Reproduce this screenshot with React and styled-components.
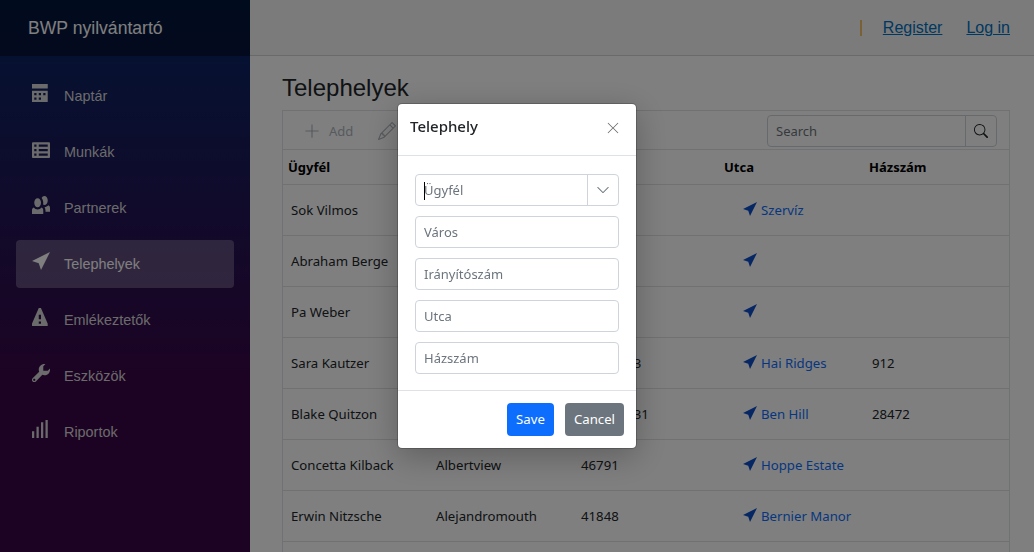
import React from 'react';
import styled, { createGlobalStyle } from 'styled-components';
import { BsPlusLg, BsPencil, BsSearch, BsChevronDown, BsXLg } from 'react-icons/bs';

const Global = createGlobalStyle`
  html, body { margin: 0; padding: 0; height: 100%; overflow: hidden; background: #fff; }
  * { box-sizing: border-box; }
  body { font-family: "Liberation Sans", Arial, sans-serif; }
`;

const Page = styled.div`display: flex; height: 552px; width: 1034px; overflow: hidden;`;
const Sidebar = styled.aside`width: 250px; flex: none; background: linear-gradient(180deg, #052767 0%, #3a0647 70%);`;
const Brand = styled.div`height: 56px; background: rgba(0,0,0,.4); display: flex; align-items: center; padding-left: 28px; color: #fff; font-size: 17.6px;`;
const Nav = styled.nav`display: flex; flex-direction: column; padding: 16px 16px 0;`;
const NavItem = styled.a`
  height: 48px; margin-bottom: 8px; display: flex; align-items: center; padding-left: 16px; border-radius: 4px;
  color: ${p => p.$active ? '#fff' : '#d7d7d7'}; font-size: 14.4px;
  background: ${p => p.$active ? 'rgba(255,255,255,.25)' : 'transparent'};
`;
const NavIcon = styled.svg`width: 18px; height: 18px; margin-right: 14px; fill: currentColor; flex: none; position: relative; top: -3px;`;

const Main = styled.main`flex: 1; min-width: 0; display: flex; flex-direction: column;`;
const TopRow = styled.header`
  height: 56px; flex: none; background: #f7f7f7; border-bottom: 1px solid #d6d5d5;
  display: flex; align-items: center; justify-content: flex-end; padding-right: 24px; font-size: 16px;
`;
const Divider = styled.span`width: 2px; height: 16px; background: #f5c36b; margin-right: 21px;`;
const TopLink = styled.a`color: #0071c1; text-decoration: underline; margin-left: ${p => p.$first ? 0 : '24px'};`;
const Content = styled.div`padding: 14px 24px 0 32px; font-family: "Noto Sans", sans-serif;`;
const Title = styled.h1`margin: 0 0 4px; font: 400 24px/36px "Liberation Sans", Arial, sans-serif; color: #212529;`;
const Grid = styled.div`border: 1px solid #dee2e6; border-bottom: 0; width: 728px;`;
const Toolbar = styled.div`height: 39px; display: flex; align-items: center; padding: 2px 12px 0 20px; border-bottom: 1px solid #dee2e6; color: #adb5bd; font-size: 13px;`;
const ToolBtn = styled.span`display: flex; align-items: center; gap: 8px; margin-right: 25px; svg { font-size: 18px; }`;
const SearchBox = styled.div`margin-left: auto; display: flex; width: 230px; height: 32px; border: 1px solid #ced4da; border-radius: 4px; align-items: center; color: #6c757d;`;
const SearchInput = styled.span`flex: 1; padding-left: 8px; font-size: 13px;`;
const SearchBtn = styled.span`width: 31px; height: 100%; border-left: 1px solid #ced4da; display: flex; align-items: center; justify-content: center; color: #212529; font-size: 14px;`;
const Row = styled.div`
  display: grid; grid-template-columns: 145px 145px 146px 145px 1fr; height: ${p => p.$head ? '35px' : '51px'};
  align-items: center; border-bottom: 1px solid #dee2e6; font-size: ${p => p.$head ? '13px' : '13.2px'};
  font-weight: ${p => p.$head ? 700 : 400}; color: ${p => p.$head ? '#000' : '#212529'};
`;
const Cell = styled.div`padding-left: ${p => p.$head ? '5px' : '8px'}; white-space: nowrap;`;
const StreetLink = styled.a`display: flex; align-items: center; gap: 4px; color: #0d6efd; padding-left: 16px; svg { width: 14px; height: 14px; fill: #0d4fc9; position: relative; top: -1px; }`;

const Backdrop = styled.div`position: fixed; inset: 0; background: rgba(0,0,0,.5); display: flex; align-items: center; justify-content: center; font-family: "Noto Sans", sans-serif;`;
const Modal = styled.div`width: 240px; height: 346px; background: #fff; border: 1px solid rgba(0,0,0,.2); border-radius: 5px; display: flex; flex-direction: column; background-clip: padding-box; box-shadow: 0 8px 32px rgba(0,0,0,.25);`;
const ModalHead = styled.div`height: 52px; padding: 0 16px 6px 12px; display: flex; align-items: center; justify-content: space-between; border-bottom: 1px solid #dee2e6; flex: none;`;
const ModalTitle = styled.h5`margin: 0 0 2px; font-size: 15px; font-weight: 500; color: #212529;`;
const CloseBtn = styled.span`color: #6c6c6c; display: flex; font-size: 14px; margin-top: 2px;`;
const ModalBody = styled.div`flex: 1; padding: 18px 17px 0; display: flex; flex-direction: column; gap: 10px;`;
const InputWrap = styled.div`position: relative; display: flex; height: 32px; border: 1px solid #ced4da; border-radius: 4px;`;
const Field = styled.input`flex: 1; min-width: 0; border: 0; outline: 0; background: transparent; padding: 0 8px; font: 400 13px "Noto Sans", sans-serif; color: #212529; &::placeholder { color: #6c757d; opacity: 1; }`;
const Caret = styled.span`position: absolute; left: 8px; top: 7px; width: 1px; height: 18px; background: #000;`;
const Chevron = styled.span`width: 31px; border-left: 1px solid #ced4da; display: flex; align-items: center; justify-content: center; color: #6c757d; font-size: 14px;`;
const ModalFoot = styled.div`height: 58px; flex: none; border-top: 1px solid #dee2e6; display: flex; align-items: center; justify-content: flex-end; gap: 11px; padding: 0 12px;`;
const Btn = styled.button`height: 33px; border: 0; border-radius: 4px; color: #fff; padding: 0 0 2px; width: ${p => p.$w}px; font: 400 13.2px "Noto Sans", sans-serif; background: ${p => p.$primary ? '#0d6efd' : '#6c757d'};`;

const icons = {
  calendar: 'M0 0v2h7v-2h-7zm0 3v4.91c0 .05.04.09.09.09h6.81c.05 0 .09-.04.09-.09v-4.91h-7zm1 1h1v1h-1v-1zm2 0h1v1h-1v-1zm2 0h1v1h-1v-1zm-4 2h1v1h-1v-1zm2 0h1v1h-1v-1z',
  list: 'M.5 1c-.28 0-.5.22-.5.5v6c0 .28.22.5.5.5h7c.28 0 .5-.22.5-.5v-6c0-.28-.22-.5-.5-.5h-7zm.5 1h1v1h-1v-1zm2 0h4v1h-4v-1zm-2 2h1v1h-1v-1zm2 0h4v1h-4v-1zm-2 2h1v1h-1v-1zm2 0h4v1h-4v-1z',
  people: 'M5.5 0c-.51 0-.95.35-1.22.88.45.54.72 1.28.72 2.13 0 .29-.03.55-.09.81.19.11.38.19.59.19.83 0 1.5-.9 1.5-2s-.67-2-1.5-2zm-3 1c-.83 0-1.5.9-1.5 2s.67 2 1.5 2 1.5-.9 1.5-2-.67-2-1.5-2zm4.75 3.16c-.43.51-1.02.82-1.69.84.27.38.44.84.44 1.34v.66h2v-1.66c0-.52-.31-.97-.75-1.19zm-6.5 1c-.44.22-.75.67-.75 1.19v1.66h5v-1.66c0-.52-.31-.97-.75-1.19-.45.53-1.06.84-1.75.84s-1.3-.32-1.75-.84z',
  location: 'M8 0l-8 4 3 1 1 3 4-8z',
  warning: 'M3.09 0c-.06 0-.1.04-.13.09l-2.94 6.81c-.02.05-.03.13-.03.19v.81c0 .05.04.09.09.09h6.81c.05 0 .09-.04.09-.09v-.81c0-.05-.01-.14-.03-.19l-2.94-6.81c-.02-.05-.07-.09-.13-.09h-.81zm-.09 3h1v2h-1v-2zm0 3h1v1h-1v-1z',
  wrench: 'M5.5 0c-1.38 0-2.5 1.12-2.5 2.5 0 .32.08.62.19.91l-2.91 2.88c-.39.39-.39 1.05 0 1.44.2.2.46.28.72.28.26 0 .52-.09.72-.28l2.88-2.91c.28.11.58.19.91.19 1.38 0 2.5-1.12 2.5-2.5 0-.16 0-.32-.03-.47l-.97.97h-2v-2l.97-.97c-.15-.03-.31-.03-.47-.03zm-4.5 6.5c.28 0 .5.22.5.5s-.22.5-.5.5-.5-.22-.5-.5.22-.5.5-.5z',
  signal: 'M6 0v8h1v-8h-1zm-2 1v7h1v-7h-1zm-2 2v5h1v-5h-1zm-2 2v3h1v-3h-1z',
};

const Icon = ({ name }) => <NavIcon viewBox="0 0 8 8"><path d={icons[name]} /></NavIcon>;

const navItems = [
  ['calendar', 'Naptár'], ['list', 'Munkák'], ['people', 'Partnerek'], ['location', 'Telephelyek', true],
  ['warning', 'Emlékeztetők'], ['wrench', 'Eszközök'], ['signal', 'Riportok'],
];

const rows = [
  ['Sok Vilmos', 'Budapest', '1111', 'Szervíz', ''],
  ['Abraham Berge', 'Port Lina', '12345', '', ''],
  ['Pa Weber', 'Lake Ona', '54321', '', ''],
  ['Sara Kautzer', 'Kuhnfort', '59873673', 'Hai Ridges', '912'],
  ['Blake Quitzon', 'Hilllton', '022417731', 'Ben Hill', '28472'],
  ['Concetta Kilback', 'Albertview', '46791', 'Hoppe Estate', ''],
  ['Erwin Nitzsche', 'Alejandromouth', '41848', 'Bernier Manor', ''],
];

export default function App() {
  return (
    <>
      <Global />
      <Page>
        <Sidebar>
          <Brand>BWP nyilvántartó</Brand>
          <Nav>
            {navItems.map(([icon, label, active]) => (
              <NavItem key={label} $active={active}><Icon name={icon} />{label}</NavItem>
            ))}
          </Nav>
        </Sidebar>
        <Main>
          <TopRow>
            <Divider />
            <TopLink $first>Register</TopLink>
            <TopLink>Log in</TopLink>
          </TopRow>
          <Content>
            <Title>Telephelyek</Title>
            <Grid>
              <Toolbar>
                <ToolBtn><BsPlusLg />Add</ToolBtn>
                <ToolBtn><BsPencil /></ToolBtn>
                <SearchBox>
                  <SearchInput>Search</SearchInput>
                  <SearchBtn><BsSearch /></SearchBtn>
                </SearchBox>
              </Toolbar>
              <Row $head>
                <Cell $head>Ügyfél</Cell><Cell $head>Város</Cell><Cell $head>Irszám</Cell><Cell $head>Utca</Cell><Cell $head>Házszám</Cell>
              </Row>
              {rows.map(r => (
                <Row key={r[0]}>
                  <Cell>{r[0]}</Cell><Cell>{r[1]}</Cell><Cell>{r[2]}</Cell>
                  <Cell><StreetLink><svg viewBox="0 0 8 8"><path d={icons.location} /></svg>{r[3]}</StreetLink></Cell>
                  <Cell>{r[4]}</Cell>
                </Row>
              ))}
              <Row />
            </Grid>
          </Content>
        </Main>
      </Page>
      <Backdrop>
        <Modal>
          <ModalHead>
            <ModalTitle>Telephely</ModalTitle>
            <CloseBtn><BsXLg /></CloseBtn>
          </ModalHead>
          <ModalBody>
            <InputWrap>
              <Field placeholder="Ügyfél" />
              <Caret />
              <Chevron><BsChevronDown /></Chevron>
            </InputWrap>
            <InputWrap><Field placeholder="Város" /></InputWrap>
            <InputWrap><Field placeholder="Irányítószám" /></InputWrap>
            <InputWrap><Field placeholder="Utca" /></InputWrap>
            <InputWrap><Field placeholder="Házszám" /></InputWrap>
          </ModalBody>
          <ModalFoot>
            <Btn $primary $w={47}>Save</Btn>
            <Btn $w={59}>Cancel</Btn>
          </ModalFoot>
        </Modal>
      </Backdrop>
    </>
  );
}
